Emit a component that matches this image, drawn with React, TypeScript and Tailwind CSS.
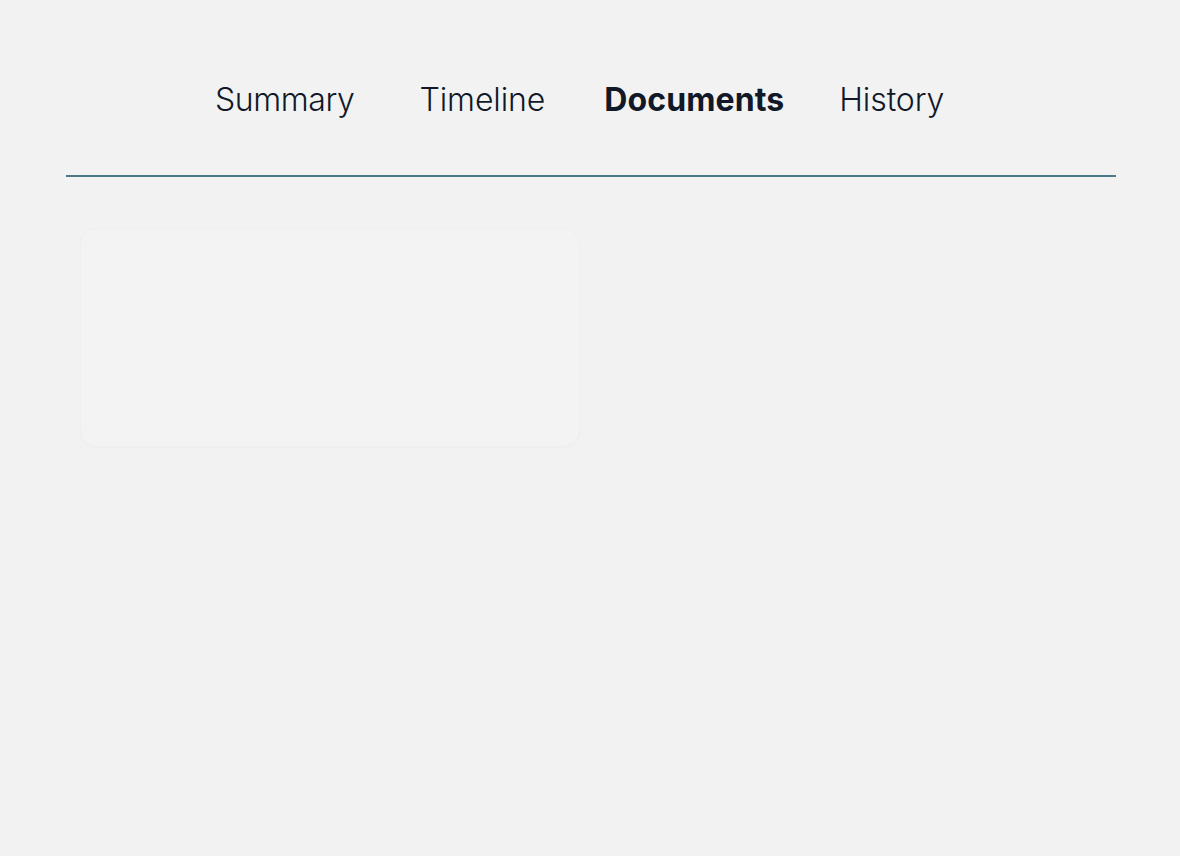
import React from "react";

export default function App() {
  const tabs = [
    { label: "Summary", cls: "ml-0 font-light tracking-[-0.4px]" },
    { label: "Timeline", cls: "ml-[65px] font-light tracking-[-0.1px]" },
    { label: "Documents", cls: "ml-[59px] font-bold tracking-[0.1px]" },
    { label: "History", cls: "ml-[55px] font-light tracking-[-0.1px]" },
  ];
  return (
    <div className="min-h-[856px] w-full bg-[#f2f2f2] font-['Inter',sans-serif] text-[#111827]">
      <div className="pl-[66px] pr-[64px]">
        <div className="flex h-[177px] items-start border-b-2 border-[#4a7a85] pl-[149px] pt-[78px]">
          {tabs.map((t) => (
            <button
              key={t.label}
              className={`${t.cls} text-[32px] leading-[44px] text-[#111827]`}
            >
              {t.label}
            </button>
          ))}
        </div>
        <div className="mt-[51px] grid grid-cols-2 gap-[36px] px-[14px]">
          <div className="h-[219px] w-[500px] rounded-[16px] border border-[#efefef] bg-[#f3f3f3] shadow-[0_1px_3px_rgba(0,0,0,0.02)]" />
        </div>
      </div>
    </div>
  );
}
